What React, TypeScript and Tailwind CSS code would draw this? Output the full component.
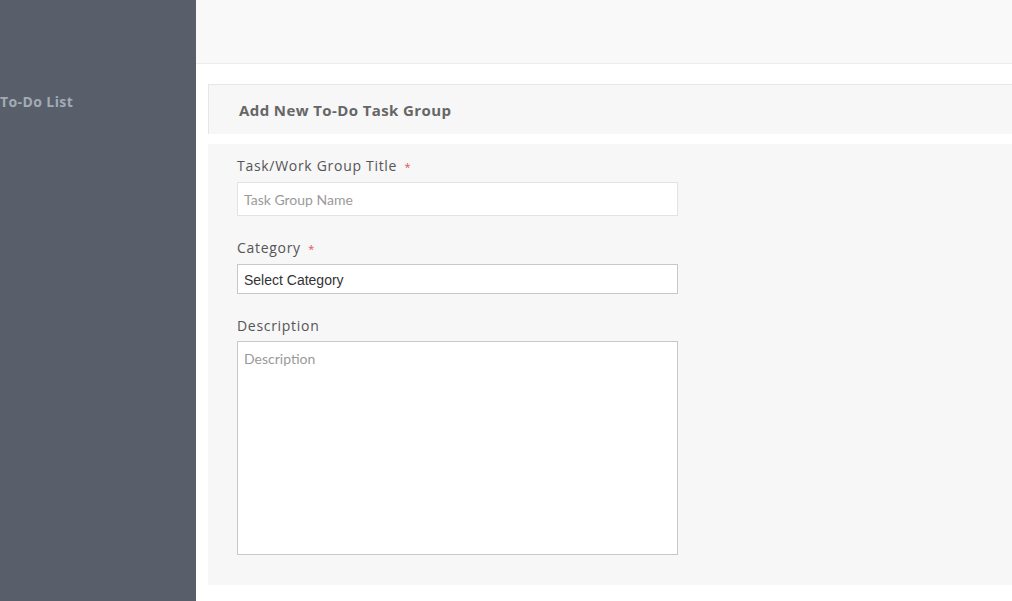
import React from "react";

const labelFont = { fontFamily: "'Open Sans', Lato, sans-serif" };

export default function App() {
  return (
    <div className="flex w-[1012px] h-[601px] overflow-hidden bg-white" style={{ fontFamily: "Lato, 'Open Sans', sans-serif" }}>
      <aside className="w-[196px] shrink-0 bg-[#585f6b]">
        <div className="pt-[92px] text-[14px] font-bold text-[#a3abb6] leading-[20px] tracking-[0.4px]" style={labelFont}>
          To-Do List
        </div>
      </aside>
      <main className="flex-1 flex flex-col">
        <div className="h-[64px] bg-[#f9f9f9] border-b border-[#ececec]" />
        <div className="pl-[12px] pt-[20px]">
          <div className="h-[50px] bg-[#f7f7f7] border-t border-l border-[#e6e6e6] flex items-center pl-[30px]">
            <h2 className="text-[15px] font-bold text-[#666] tracking-[0.4px] pt-[2px]" style={labelFont}>
              Add New To-Do Task Group
            </h2>
          </div>
          <div className="mt-[10px] h-[441px] bg-[#f7f7f7] pl-[29px] pt-[12px]">
            <label className="block text-[14px] text-[#555] leading-[20px] tracking-[0.7px]" style={labelFont}>
              Task/Work Group Title <span className="text-[#e05555] text-[11px] ml-[3px]">*</span>
            </label>
            <input
              className="mt-[5px] block w-[441px] h-[34px] bg-white border border-[#e3e3e3] px-[6px] text-[14px] text-[#333] placeholder:text-[#9a9a9a] outline-none"
              placeholder="Task Group Name"
            />
            <label className="block mt-[22px] text-[14px] text-[#555] leading-[20px] tracking-[0.7px]" style={labelFont}>
              Category <span className="text-[#e05555] text-[11px] ml-[3px]">*</span>
            </label>
            <div
              className="mt-[5px] w-[441px] h-[30px] bg-white border border-[#c8c8c8] px-[6px] pt-[2px] flex items-center text-[14px] text-[#333]"
              style={{ fontFamily: "'Liberation Sans', Arial, sans-serif" }}
            >
              Select Category
            </div>
            <label className="block mt-[22px] text-[14px] text-[#555] leading-[20px] tracking-[0.7px]" style={labelFont}>
              Description
            </label>
            <textarea
              className="mt-[5px] block w-[441px] h-[214px] bg-white border border-[#c8c8c8] px-[6px] py-[6px] text-[14px] text-[#333] placeholder:text-[#9a9a9a] outline-none resize-none"
              placeholder="Description"
            />
          </div>
        </div>
      </main>
    </div>
  );
}
